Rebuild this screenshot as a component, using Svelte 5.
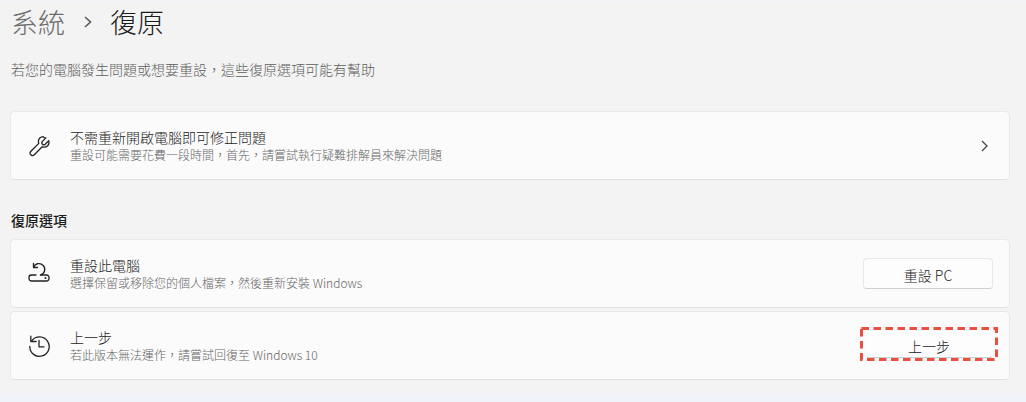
<script>
  const chevron = "M1 1l5 5-5 5";
  const comma = "\uFF0C";
</script>

<div class="page">
  <header class="crumb">
    <span class="parent">系統</span>
    <svg class="sep" width="10" height="14" viewBox="0 0 10 14"><path d="M2 2l5.5 5L2 12" /></svg>
    <span class="current">復原</span>
  </header>
  <p class="intro">若您的電腦發生問題或想要重設{comma}這些復原選項可能有幫助</p>

  <section class="card first">
    <svg class="icon" width="24" height="24" viewBox="0 0 24 24">
      <path d="M15.2 2.6c-2.7 0-4.8 2.2-4.8 4.8 0 .8.2 1.4.4 2L2.9 17.3c-1.1 1.1-1.1 2.6-.1 3.5.9 1 2.5 1 3.5-.1l7.9-7.9c.6.3 1.3.4 2 .4 2.7 0 4.8-2.2 4.8-4.8 0-.6-.1-1.2-.3-1.7l-3.5 3.5c-.8.7-2.1.7-2.8 0-.8-.8-.8-2 0-2.8l3.500-3.500c-.5-.2-1.100-.3-1.700-.3z" />
    </svg>
    <div class="text">
      <div class="title">不需重新開啟電腦即可修正問題</div>
      <div class="sub">重設可能需要花費一段時間{comma}首先{comma}請嘗試執行疑難排解員來解決問題</div>
    </div>
    <svg class="chev" width="8" height="12" viewBox="0 0 8 12"><path d={chevron} /></svg>
  </section>

  <h2 class="heading">復原選項</h2>

  <section class="card">
    <svg class="icon" width="24" height="24" viewBox="0 0 24 24">
      <path d="M8 13H3.5A2.5 2.5 0 0 0 1 15.5v1A2.5 2.5 0 0 0 3.500 19h15a2.500 2.500 0 0 0 2.500-2.500v-1a2.500 2.500 0 0 0-2.500-2.500H13" />
      <path d="M5.500 5.500A5.800 5.800 0 1 1 12.500 13" />
      <path d="M5.500 1.500v4h4" />
      <circle class="dot" cx="17.5" cy="16" r="1" />
    </svg>
    <div class="text">
      <div class="title">重設此電腦</div>
      <div class="sub">選擇保留或移除您的個人檔案{comma}然後重新安裝 Windows</div>
    </div>
    <button class="btn">重設 PC</button>
  </section>

  <section class="card second">
    <svg class="icon" width="24" height="24" viewBox="0 0 24 24">
      <path d="M4 6.500A9.700 9.700 0 1 1 1.800 12.500" />
      <path d="M2.800 2.200v5.300h5.300" />
      <path d="M11 6.500v6.300h5" />
    </svg>
    <div class="text">
      <div class="title">上一步</div>
      <div class="sub">若此版本無法運作{comma}請嘗試回復至 Windows 10</div>
    </div>
    <div class="focus">
      <button class="btn">上一步</button>
      <svg class="dash" width="138" height="34" viewBox="0 0 138 34"><rect x="1.5" y="1.5" width="135" height="31" /></svg>
    </div>
  </section>
</div>

<style>
  :global(body) {
    margin: 0;
    background: #eff4fa;
  }
  .page {
    box-sizing: border-box;
    width: 1026px;
    height: 395px;
    margin-top: 1px;
    padding: 0 16px 0 10px;
    background: #f3f3f3;
    font-family: "Noto Sans CJK TC", "Noto Sans", sans-serif;
    color: #1b1b1b;
    overflow: hidden;
  }
  .crumb {
    display: flex;
    align-items: center;
    height: 42px;
    padding-left: 1px;
    font-size: 27px;
    font-weight: 300;
    line-height: 42px;
  }
  .parent { color: #6c6c6c; }
  .current { color: #1a1a1a; }
  .sep {
    margin: 0 17px 0 18px;
    fill: none;
    stroke: #5a5a5a;
    stroke-width: 1.6;
  }
  .intro {
    margin: 16px 0 0 1px;
    font-size: 14px;
    line-height: 20px;
    color: #5d5d5d;
    font-weight: 300;
  }
  .card {
    box-sizing: border-box;
    display: flex;
    align-items: center;
    height: 69px;
    padding: 0 16px 0 17px;
    background: #fbfbfb;
    border: 1px solid #e9e9e9;
    border-bottom-color: #e2e2e2;
    border-radius: 5px;
  }
  .first { margin-top: 32px; }
  .second { margin-top: 3px; }
  .icon {
    flex: none;
    width: 24px;
    height: 24px;
    fill: none;
    stroke: #222;
    stroke-width: 1.3;
    stroke-linecap: round;
    stroke-linejoin: round;
  }
  .icon .dot { fill: #222; stroke: none; }
  .text {
    flex: 1;
    margin-left: 18px;
    padding-bottom: 1px;
  }
  .title {
    font-size: 14px;
    line-height: 19px;
    color: #1b1b1b;
    font-weight: 300;
  }
  .sub {
    font-size: 12px;
    line-height: 16px;
    color: #666;
    font-weight: 300;
  }
  .chev {
    margin-right: 4px;
    fill: none;
    stroke: #444;
    stroke-width: 1.3;
  }
  .heading {
    margin: 30px 0 0 1px;
    font-size: 14px;
    line-height: 20px;
    font-weight: 500;
    color: #1b1b1b;
  }
  .heading + .card { margin-top: 9px; }
  .btn {
    box-sizing: border-box;
    display: block;
    width: 130px;
    height: 31px;
    padding: 2px 0 0;
    background: #fdfdfd;
    border: 1px solid #e8e8e8;
    border-bottom-color: #cfcfcf;
    border-radius: 4px;
    font: 300 14px "Noto Sans CJK TC", "Noto Sans", sans-serif;
    color: #1b1b1b;
  }
  .focus {
    position: relative;
    box-sizing: border-box;
    width: 138px;
    height: 34px;
    margin: -3px -5px 0 0;
    padding: 3px 5px;
  }
  .focus .btn {
    width: 100%;
    height: 100%;
    padding-top: 4px;
    border-color: transparent;
    border-bottom-color: #cfcfcf;
  }
  .dash {
    position: absolute;
    inset: 0;
    fill: none;
    stroke: #e94f3f;
    stroke-width: 3;
    stroke-dasharray: 7.5 4.5;
  }
</style>
